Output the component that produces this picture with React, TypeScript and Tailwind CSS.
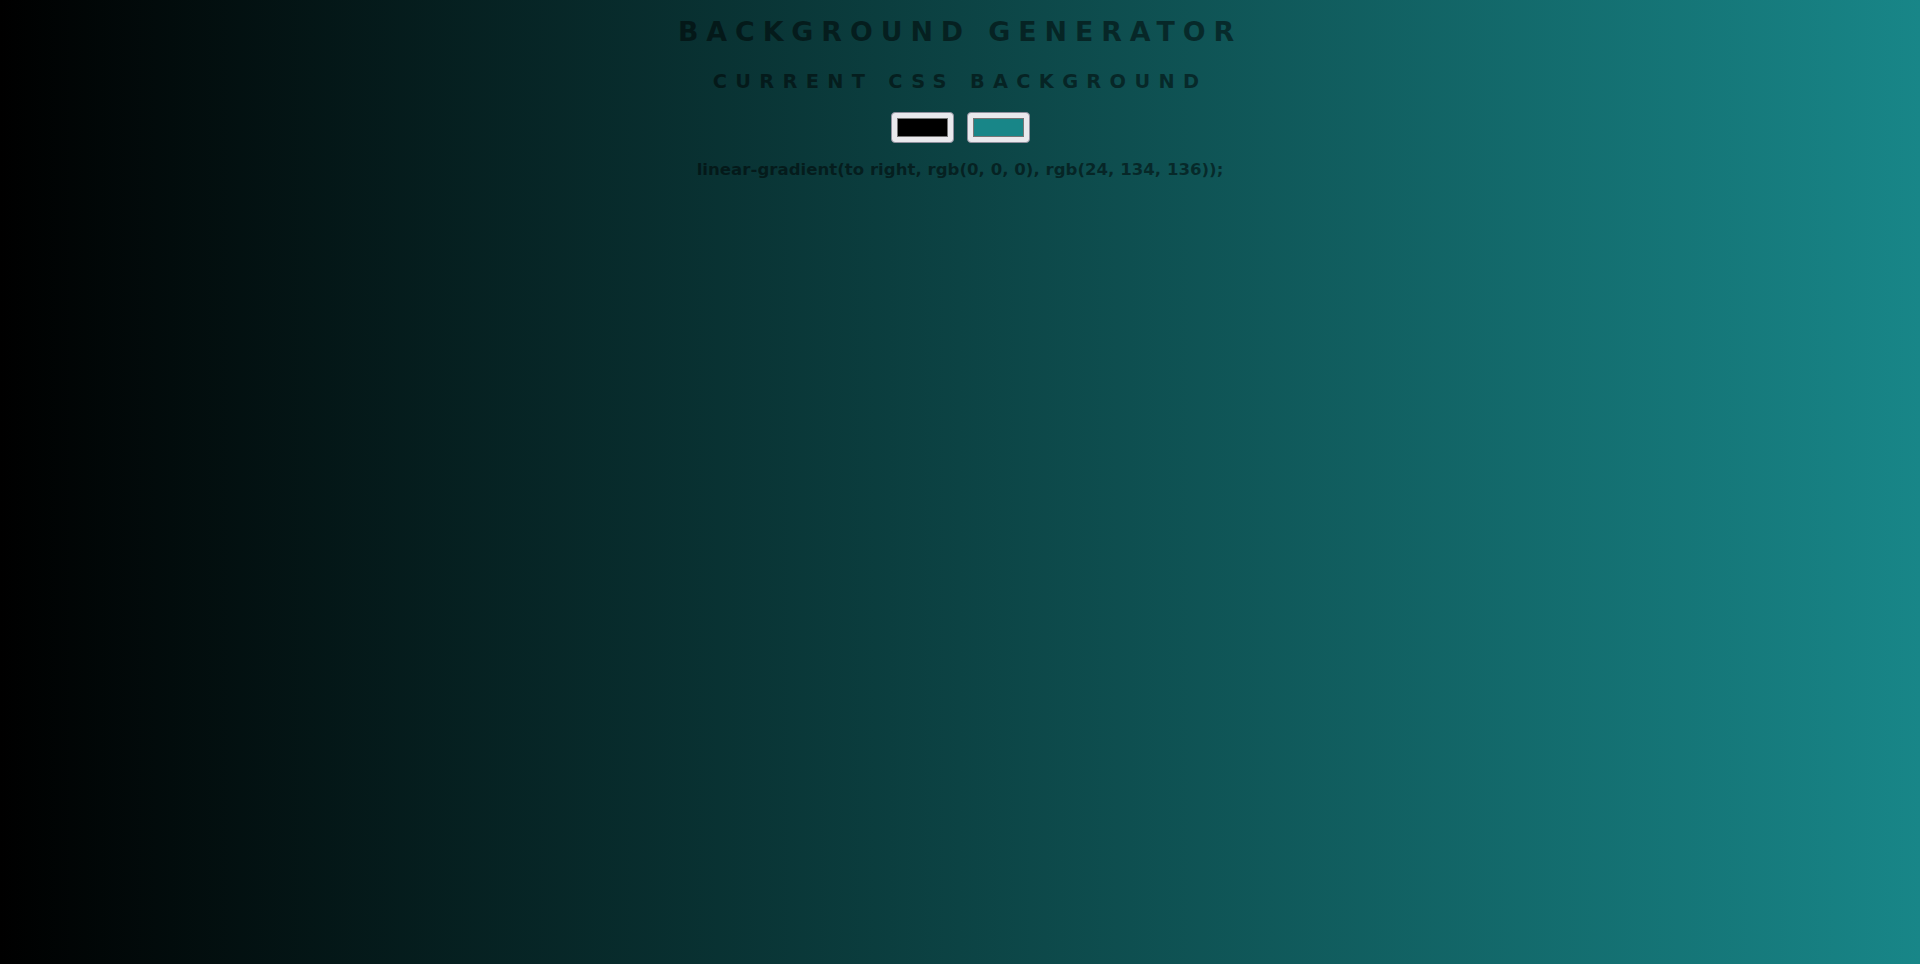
const colors = ["#000000", "#188688"];

function ColorSwatch({ value }: { value: string }) {
  return (
    <div className="w-[63px] h-[31px] rounded-[4px] border border-[#8f8f9d] bg-[#e9e9ed] p-[5px]">
      <div
        className="w-full h-full border border-[#767676]"
        style={{ backgroundColor: value }}
      />
    </div>
  );
}

export default function App() {
  return (
    <div className="min-h-screen w-full bg-[linear-gradient(to_right,rgb(0,0,0),rgb(24,134,136))] font-['DejaVu_Sans',sans-serif] font-bold text-black/50 text-center">
      <h1 className="pt-[17px] text-[26.9px] leading-[30px] uppercase tracking-[7.9px]">
        Background Generator
      </h1>
      <h3 className="mt-[24px] text-[19.4px] leading-[22px] uppercase tracking-[8.3px]">
        Current CSS Background
      </h3>
      <div className="mt-[19px] flex justify-center gap-[13px]">
        {colors.map((c) => (
          <ColorSwatch key={c} value={c} />
        ))}
      </div>
      <h3 className="mt-[17px] text-[16.6px] leading-[19px]">
        linear-gradient(to right, rgb(0, 0, 0), rgb(24, 134, 136));
      </h3>
    </div>
  );
}
